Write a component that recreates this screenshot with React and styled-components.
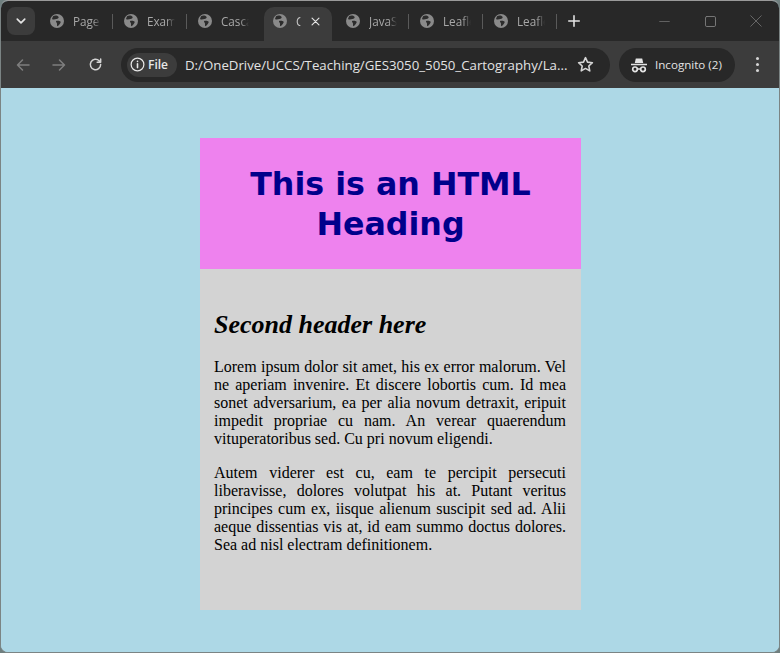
import React from "react";
import styled, { createGlobalStyle } from "styled-components";

const Global = createGlobalStyle`
  html, body { margin: 0; padding: 0; background: #6f7f7f; }
  #root { width: 780px; height: 653px; overflow: hidden; }
`;

const Win = styled.div`
  width: 780px; height: 653px; box-sizing: border-box;
  border: 1px solid #7b8484; border-top-color: #9a9a9a;
  border-radius: 8px; overflow: hidden;
  display: flex; flex-direction: column;
  font-family: "Open Sans", "Noto Sans", sans-serif;
  background: #add8e6;
`;
const Strip = styled.div`
  height: 40px; flex: none; background: #282828; display: flex; align-items: flex-start;
  padding-left: 6px; box-sizing: border-box; color: #c7c7c7;
`;
const Chevron = styled.div`
  width: 28px; height: 28px; margin-top: 6px; margin-right: 4px; border-radius: 8px;
  background: #3c3c3c; display: flex; align-items: center; justify-content: center; flex: none;
`;
const Tab = styled.div`
  width: 74px; height: 34px; margin-top: 6px; box-sizing: border-box; flex: none;
  position: relative; display: flex; align-items: center; padding: 0 0 6px 11px; gap: 9px;
  font-size: 11.7px; color: #a8a8a8;
  ${p => p.$sep && `&::after { content: ""; position: absolute; right: 0; top: 7px; width: 1px; height: 15px; background: #5a5a5a; }`}
  ${p => p.$active && `
    background: #3c3c3c; border-radius: 10px 10px 0 0; width: 68px; margin: 6px 3px 0; padding-left: 9px; color: #c8c8c8;
  `}
`;
const Title = styled.span`
  width: ${p => p.$w || 28}px; overflow: hidden; white-space: nowrap; flex: none; line-height: 16px;
  -webkit-mask-image: linear-gradient(to right, #000 70%, transparent 100%);
  mask-image: linear-gradient(to right, #000 70%, transparent 100%);
`;
const Plus = styled.div`
  width: 34px; height: 34px; display: flex; align-items: center; justify-content: center; flex: none; margin-top: 3px;
`;
const Spacer = styled.div` flex: 1; `;
const WinBtn = styled.div`
  width: 46px; height: 40px; display: flex; align-items: center; justify-content: center; flex: none;
`;
const Toolbar = styled.div`
  height: 47px; flex: none; background: #3c3c3c; display: flex; align-items: center; box-sizing: border-box;
`;
const NavBtn = styled.div`
  width: 36px; height: 34px; display: flex; align-items: center; justify-content: center; flex: none;
`;
const Nav = styled.div` display: flex; padding-left: 4px; margin-right: 8px; `;
const Omni = styled.div`
  width: 489px; height: 34px; border-radius: 17px; background: #282828; display: flex; align-items: center;
  padding-left: 6px; box-sizing: border-box; flex: none; color: #e3e3e3;
`;
const Chip = styled.div`
  width: 50px; height: 24px; border-radius: 12px; background: #3c3c3c; display: flex; align-items: center;
  padding-left: 3px; gap: 3px; box-sizing: border-box; font-size: 12px; font-weight: 600; color: #e8e8e8; flex: none;
`;
const Url = styled.div`
  margin-left: 8px; font-size: 13.25px; width: 388px; white-space: nowrap; overflow: hidden;
`;
const Star = styled.div` margin-left: 4px; display: flex; `;
const Pill = styled.div`
  margin-left: 9px; width: 116px; height: 34px; border-radius: 17px; background: #282828; display: flex;
  align-items: center; padding-left: 11px; gap: 7px; box-sizing: border-box; font-size: 11.6px; color: #e3e3e3; flex: none;
`;
const Dots = styled.div`
  margin-left: 13px; display: flex; flex-direction: column; gap: 3px; width: 18px; align-items: center;
  & > i { width: 3px; height: 3px; border-radius: 50%; background: #d5d5d5; display: block; }
`;

const Page = styled.main`
  flex: 1; background: #add8e6; padding-top: 50px; display: flex; justify-content: center; align-items: flex-start;
`;
const Card = styled.article` width: 381px; margin-left: 1px; `;
const Header = styled.header`
  background: #ee82ee; padding: 26px 15px 25px; text-align: center;
`;
const H1 = styled.h1`
  margin: 0; font-family: "DejaVu Sans", Verdana, sans-serif; font-weight: 700; font-size: 31.7px; line-height: 40px; color: #00008b;
`;
const Body = styled.section`
  background: #d3d3d3; padding: 41px 15px 56px 14px; font-family: "Liberation Serif", serif; font-size: 16px; line-height: 18px; color: #000;
`;
const H2 = styled.h2`
  margin: 0 0 18px; font-family: "Liberation Serif", serif; font-style: italic; font-weight: 700; font-size: 26px; line-height: 30px;
`;
const P = styled.p`
  margin: 0 0 16px; text-align: justify; &:last-child { margin-bottom: 0; }
`;

const Globe = () => (
  <svg width="14" height="14" viewBox="0 0 14 14" style={{ flex: "none" }}>
    <circle cx="7" cy="7" r="7" fill="#8a8a8a" />
    <path d="M3 2.200 C5 1.200 7.500 1.500 8.500 2.800 C9.300 3.900 7.600 4.800 6.500 5 C4.800 5.300 3.600 6 2 5 Z M6 7 C7.800 6.200 9.800 6.800 10.800 7.800 C10.500 9.500 9 11.500 7.300 12.300 C6.500 11 7.400 9.800 6.800 9 C6.400 8.500 5.900 7.800 6 7 Z" fill="#2c2c2c" />
  </svg>
);
const Ic = ({ children, w = 16, sw = 1.5, c = "currentColor" }) => (
  <svg width={w} height={w} viewBox="0 0 16 16" fill="none" stroke={c} strokeWidth={sw} strokeLinecap="round" strokeLinejoin="round" style={{ flex: "none" }}>{children}</svg>
);

export default function App() {
  return (
    <>
      <Global />
      <Win>
        <Strip>
          <Chevron><Ic w={12} sw={2.2} c="#e3e3e3"><path d="M3 5.500l5 5 5-5" /></Ic></Chevron>
          <Tab $sep><Globe /><Title>Page</Title></Tab>
          <Tab $sep><Globe /><Title>Example</Title></Tab>
          <Tab><Globe /><Title>Cascading</Title></Tab>
          <Tab $active>
            <Globe /><Title $w={5}>C</Title>
            <Ic w={11} sw={1.7} c="#e3e3e3"><path d="M3 3l10 10M13 3L3 13" /></Ic>
          </Tab>
          <Tab $sep><Globe /><Title>JavaScript</Title></Tab>
          <Tab $sep><Globe /><Title>Leaflet</Title></Tab>
          <Tab $sep><Globe /><Title>Leaflet</Title></Tab>
          <Plus><Ic w={14} sw={1.8} c="#e3e3e3"><path d="M8 2v12M2 8h12" /></Ic></Plus>
          <Spacer />
          <WinBtn><Ic w={11} sw={1} c="#7c7c7c"><path d="M1 8h14" /></Ic></WinBtn>
          <WinBtn><Ic w={11} sw={1.4} c="#7c7c7c"><rect x="0.700" y="0.700" width="14.600" height="14.600" rx="2" /></Ic></WinBtn>
          <WinBtn><Ic w={12} sw={1} c="#7c7c7c"><path d="M1 1l14 14M15 1L1 15" /></Ic></WinBtn>
        </Strip>
        <Toolbar>
          <Nav>
            <NavBtn><Ic w={16} sw={1.5} c="#7e7e7e"><path d="M14 8H2.500M7.500 3L2.500 8l5 5" /></Ic></NavBtn>
            <NavBtn><Ic w={16} sw={1.5} c="#7e7e7e"><path d="M2 8h11.500M8.500 3l5 5-5 5" /></Ic></NavBtn>
            <NavBtn><Ic w={15} sw={1.6} c="#d5d5d5"><path d="M13.500 8a5.500 5.500 0 1 1-1.600-3.900L13.500 5.700M13.500 2v3.700H9.800" /></Ic></NavBtn>
          </Nav>
          <Omni>
            <Chip>
              <Ic w={15} sw={1.3} c="#e8e8e8"><circle cx="8" cy="8" r="6.800" /><path d="M8 7.300v4M8 4.600v.2" strokeWidth="1.700" /></Ic>
              <span>File</span>
            </Chip>
            <Url>D:/OneDrive/UCCS/Teaching/GES3050_5050_Cartography/La...</Url>
            <Star><Ic w={17} sw={1.5} c="#d5d5d5"><path d="M8 1.600l1.900 4.200 4.600.5-3.400 3.100.9 4.600L8 11.700 4 14l.9-4.600L1.500 6.300l4.600-.5z" /></Ic></Star>
          </Omni>
          <Pill>
            <svg width="18" height="16" viewBox="0 0 18 16" style={{ flex: "none" }}>
              <path d="M4.800 6 L5.800 1.500 H12.200 L13.200 6 Z" fill="#e3e3e3" />
              <path d="M1 7.400 H17" stroke="#e3e3e3" strokeWidth="1.500" />
              <circle cx="5" cy="12.300" r="2.300" fill="none" stroke="#e3e3e3" strokeWidth="1.700" />
              <circle cx="13" cy="12.300" r="2.300" fill="none" stroke="#e3e3e3" strokeWidth="1.700" />
              <path d="M7.500 12 H10.500" stroke="#e3e3e3" strokeWidth="1.500" />
            </svg>
            <span>Incognito (2)</span>
          </Pill>
          <Dots><i /><i /><i /></Dots>
        </Toolbar>
        <Page>
          <Card>
            <Header><H1>This is an HTML Heading</H1></Header>
            <Body>
              <H2>Second header here</H2>
              <P>Lorem ipsum dolor sit amet, his ex error malorum. Vel ne aperiam invenire. Et discere lobortis cum. Id mea sonet adversarium, ea per alia novum detraxit, eripuit impedit propriae cu nam. An verear quaerendum vituperatoribus sed. Cu pri novum eligendi.</P>
              <P>Autem viderer est cu, eam te percipit persecuti liberavisse, dolores volutpat his at. Putant veritus principes cum ex, iisque alienum suscipit sed ad. Alii aeque dissentias vis at, id eam summo doctus dolores. Sea ad nisl electram definitionem.</P>
            </Body>
          </Card>
        </Page>
      </Win>
    </>
  );
}
